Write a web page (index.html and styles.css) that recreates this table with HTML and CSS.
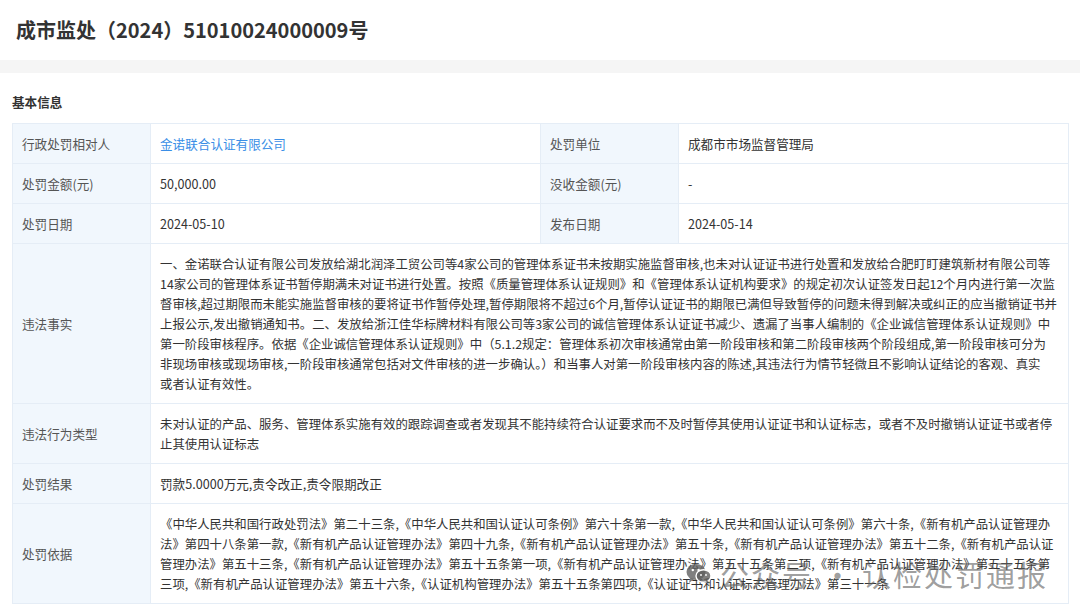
FILE: index.html
```html
<!DOCTYPE html>
<html lang="zh-CN">
<head>
<meta charset="utf-8">
<title>成市监处（2024）51010024000009号</title>
<link rel="stylesheet" href="styles.css">
</head>
<body>
<div class="page">
  <header class="title-bar">
    <h1 class="title">成市监处（2024）51010024000009号</h1>
  </header>
  <div class="band"></div>
  <section class="section">
    <h2 class="section-title">基本信息</h2>
    <table class="info">
      <colgroup>
        <col class="c-label"><col class="c-value"><col class="c-label"><col class="c-value">
      </colgroup>
      <tbody>
        <tr>
          <th>行政处罚相对人</th>
          <td><a class="link" href="#">金诺联合认证有限公司</a></td>
          <th>处罚单位</th>
          <td>成都市市场监督管理局</td>
        </tr>
        <tr>
          <th>处罚金额(元)</th>
          <td>50,000.00</td>
          <th>没收金额(元)</th>
          <td>-</td>
        </tr>
        <tr>
          <th>处罚日期</th>
          <td>2024-05-10</td>
          <th>发布日期</th>
          <td>2024-05-14</td>
        </tr>
        <tr>
          <th>违法事实</th>
          <td colspan="3" class="long">一、金诺联合认证有限公司发放给湖北润泽工贸公司等4家公司的管理体系证书未按期实施监督审核,也未对认证证书进行处置和发放给合肥盯盯建筑新材有限公司等<br>14家公司的管理体系证书暂停期满未对证书进行处置。按照《质量管理体系认证规则》和《管理体系认证机构要求》的规定初次认证签发日起12个月内进行第一次监<br>督审核,超过期限而未能实施监督审核的要将证书作暂停处理,暂停期限将不超过6个月,暂停认证证书的期限已满但导致暂停的问题未得到解决或纠正的应当撤销证书并<br>上报公示,发出撤销通知书。二、发放给浙江佳华标牌材料有限公司等3家公司的诚信管理体系认证证书减少、遗漏了当事人编制的《企业诚信管理体系认证规则》中<br>第一阶段审核程序。依据《企业诚信管理体系认证规则》中（5.1.2规定：管理体系初次审核通常由第一阶段审核和第二阶段审核两个阶段组成,第一阶段审核可分为<br>非现场审核或现场审核,一阶段审核通常包括对文件审核的进一步确认。）和当事人对第一阶段审核内容的陈述,其违法行为情节轻微且不影响认证结论的客观、真实<br>或者认证有效性。</td>
        </tr>
        <tr>
          <th>违法行为类型</th>
          <td colspan="3" class="long">未对认证的产品、服务、管理体系实施有效的跟踪调查或者发现其不能持续符合认证要求而不及时暂停其使用认证证书和认证标志，或者不及时撤销认证证书或者停<br>止其使用认证标志</td>
        </tr>
        <tr>
          <th>处罚结果</th>
          <td colspan="3">罚款5.0000万元,责令改正,责令限期改正</td>
        </tr>
        <tr>
          <th>处罚依据</th>
          <td colspan="3" class="long">《中华人民共和国行政处罚法》第二十三条,《中华人民共和国认证认可条例》第六十条第一款,《中华人民共和国认证认可条例》第六十条,《新有机产品认证管理办<br>法》第四十八条第一款,《新有机产品认证管理办法》第四十九条,《新有机产品认证管理办法》第五十条,《新有机产品认证管理办法》第五十二条,《新有机产品认证<br>管理办法》第五十三条,《新有机产品认证管理办法》第五十五条第一项,《新有机产品认证管理办法》第五十五条第二项,《新有机产品认证管理办法》第五十五条第<br>三项,《新有机产品认证管理办法》第五十六条,《认证机构管理办法》第五十五条第四项,《认证证书和认证标志管理办法》第三十一条</td>
        </tr>
      </tbody>
    </table>
  </section>
  <div class="watermark" aria-hidden="true">
    <svg class="wm-icon" viewBox="0 0 26 22" width="26" height="22">
      <ellipse cx="10" cy="9" rx="9.5" ry="8" fill="currentColor"/>
      <path d="M4 15 L3 20 L8 16 Z" fill="currentColor"/>
      <ellipse cx="17.5" cy="13" rx="7.5" ry="6.3" fill="currentColor" stroke="#fff" stroke-width="1.4"/>
      <path d="M22 17.5 L23.5 21 L19.5 18.6 Z" fill="currentColor"/>
      <circle cx="6.8" cy="7" r="1.2" fill="#fff"/>
      <circle cx="12.6" cy="7" r="1.2" fill="#fff"/>
      <circle cx="15" cy="12" r="0.9" fill="#fff"/>
      <circle cx="20" cy="12" r="0.9" fill="#fff"/>
    </svg>
    <span class="wm-text">公众号</span>
    <span class="wm-sep">·</span>
    <span class="wm-text">认检处罚通报</span>
  </div>
</div>
</body>
</html>
```

FILE: styles.css
```css
html, body {
  margin: 0;
  padding: 0;
  background: #ffffff;
}

body {
  font-family: "Noto Sans CJK SC", "Noto Sans", sans-serif;
  color: #333333;
  width: 1080px;
  height: 615px;
  overflow: hidden;
}

.page {
  position: relative;
  width: 1080px;
  height: 615px;
}

.title-bar {
  height: 60px;
  display: flex;
  align-items: center;
  padding-left: 16px;
}

.title {
  margin: 0;
  font-size: 20px;
  font-weight: 700;
  line-height: 24px;
  color: #333333;
}

.band {
  height: 13px;
  background: #f5f5f5;
}

.section {
  padding: 0 12px;
}

.section-title {
  margin: 0;
  padding-top: 20px;
  margin-bottom: 12px;
  font-size: 12.6px;
  line-height: 18px;
  font-weight: 700;
  color: #333333;
}

.info {
  width: 1056px;
  border-collapse: collapse;
  table-layout: fixed;
  font-size: 12.6px;
  line-height: 20px;
}

.c-label {
  width: 138px;
}

.c-value {
  width: 390px;
}

.info th,
.info td {
  border: 1px solid #e5edf6;
  padding: 10px 9px 9px 9px;
  vertical-align: middle;
  text-align: left;
}

.info th {
  background: #f1f7fd;
  font-weight: 400;
  color: #555555;
}

.info td {
  background: #ffffff;
  color: #333333;
}

.info td.long {
  white-space: nowrap;
  font-size: 12.4px;
}

.link {
  color: #3a8ee6;
  text-decoration: none;
}

.watermark {
  position: absolute;
  left: 686px;
  top: 556px;
  display: flex;
  align-items: center;
  gap: 6px;
  color: rgba(95, 95, 95, 0.62);
  pointer-events: none;
}

.wm-icon {
  color: rgba(95, 95, 95, 0.8);
  margin-right: 2px;
}

.wm-text {
  font-size: 29px;
  line-height: 36px;
  letter-spacing: 2px;
  font-weight: 400;
}

.wm-sep {
  font-size: 29px;
  line-height: 36px;
  margin: 0 4px;
}
```
